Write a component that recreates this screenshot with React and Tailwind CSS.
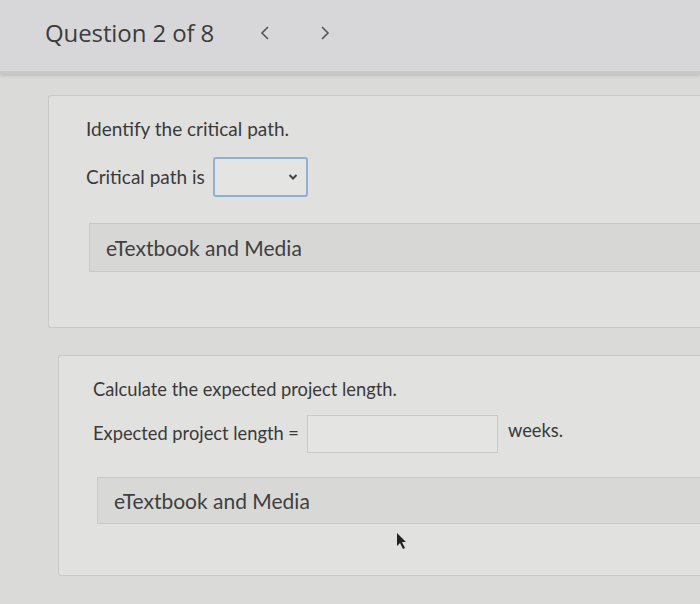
import React from "react";

export default function App() {
  return (
    <div className="w-[700px] h-[604px] overflow-hidden bg-[#dadad8] text-[#3a3a3a]" style={{ fontFamily: "Lato, 'Open Sans', sans-serif" }}>
      <div className="h-[74px] bg-[#d7d7d9] flex items-center pl-[45px] pb-[6px] border-b-[3px] border-[#c8c8ca] shadow-[0_2px_3px_rgba(0,0,0,0.12)]">
        <span className="text-[24px] text-[#3c3c3c] tracking-[-0.1px]" style={{ fontFamily: "'Open Sans', sans-serif" }}>Question 2 of 8</span>
        <svg className="ml-[45px]" width="12" height="18" viewBox="0 0 12 18"><path d="M9 3 L3 9 L9 15" fill="none" stroke="#555" strokeWidth="1.6" /></svg>
        <svg className="ml-[48px]" width="12" height="18" viewBox="0 0 12 18"><path d="M3 3 L9 9 L3 15" fill="none" stroke="#555" strokeWidth="1.6" /></svg>
      </div>

      <div className="pl-[48px] pt-[21px]">
        <div className="h-[233px] rounded-l-[3px] bg-[#e0e0de] border border-[#c9c9c7] border-r-0 pl-[37px] pt-[21px]">
          <div className="text-[19px] leading-[24px]">Identify the critical path.</div>
          <div className="flex items-center mt-[16px]">
            <span className="text-[19px]">Critical path is</span>
            <div className="ml-[8px] w-[95px] h-[40px] rounded-[3px] border-2 border-[#8fb0d6] bg-[#e4e4e2] flex items-center justify-end pr-[8px]">
              <svg width="10" height="8" viewBox="0 0 10 8"><path d="M1.5 2 L5 5.5 L8.5 2" fill="none" stroke="#444" strokeWidth="2" /></svg>
            </div>
          </div>
          <div className="ml-[3px] mt-[26px] h-[49px] bg-[#d7d7d5] border border-[#c9c9c7] border-r-0 flex items-center pl-[16px]">
            <span className="text-[21px] text-[#404040]">eTextbook and Media</span>
          </div>
        </div>
      </div>

      <div className="pl-[58px] pt-[27px]">
        <div className="h-[221px] rounded-l-[3px] bg-[#e1e1df] border border-[#c9c9c7] border-r-0 pl-[34px] pt-[21px]">
          <div className="text-[18.3px] leading-[24px]">Calculate the expected project length.</div>
          <div className="flex items-center mt-[14px]">
            <span className="text-[18.3px]">Expected project length =</span>
            <div className="ml-[8px] w-[191px] h-[38px] border border-[#c9c9c7] bg-[#e4e4e2]"></div>
            <span className="ml-[10px] text-[18.3px] -mt-[6px]">weeks.</span>
          </div>
          <div className="ml-[4px] mt-[24px] h-[47px] bg-[#d8d8d6] border border-[#c9c9c7] border-r-0 flex items-center pl-[16px]">
            <span className="text-[21px] text-[#404040]">eTextbook and Media</span>
          </div>
          <svg className="ml-[302px] mt-[8px]" width="14" height="18" viewBox="0 0 14 18"><path d="M2 1 L2 14 L5 11 L8 17 L10 16 L7 10 L11 10 Z" fill="#222" /></svg>
        </div>
      </div>
    </div>
  );
}
